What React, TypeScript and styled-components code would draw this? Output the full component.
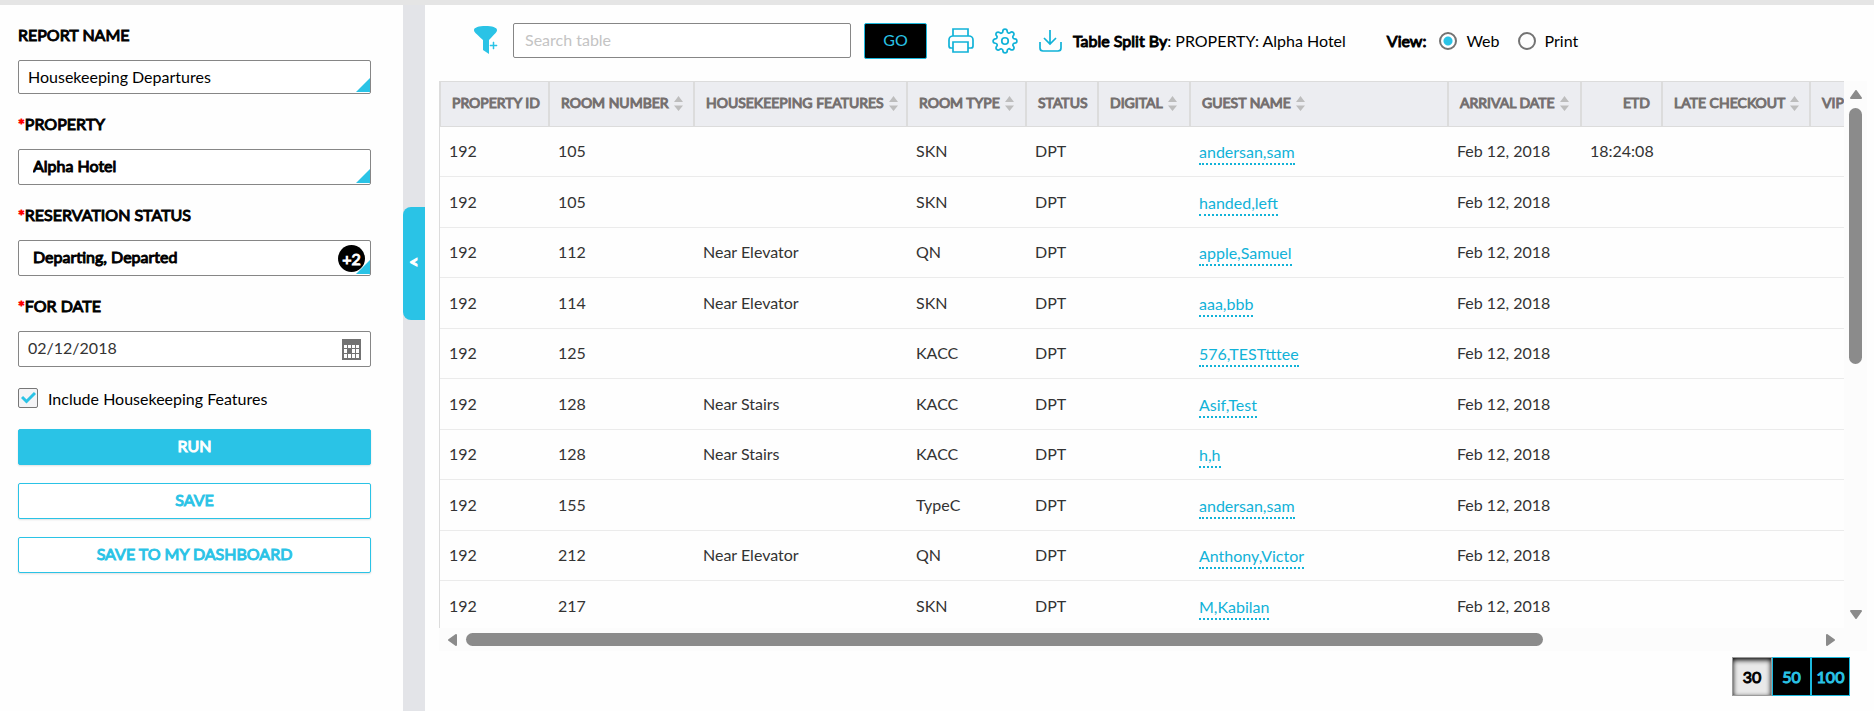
import React from "react";
import styled, { createGlobalStyle, css } from "styled-components";
import { FiSettings } from "react-icons/fi";

const CYAN = "#2ac3e6";

const GlobalStyle = createGlobalStyle`
  *, *::before, *::after { box-sizing: border-box; }
  body { margin: 0; background: #fefefe; color: #000; font: 16px/20px Lato, "Liberation Sans", sans-serif; }
  button, input { font: inherit; }
`;

const heavy = css`
  -webkit-text-stroke: 1px currentColor;
`;

const Page = styled.div`
  display: flex;
  min-height: 100vh;
  border-top: 5px solid #e5e5e5;
`;

const Sidebar = styled.form`
  flex: none;
  width: 403px;
  padding: 20px 32px 20px 18px;
  display: flex;
  flex-direction: column;
`;

const Field = styled.div`
  display: flex;
  flex-direction: column;
  gap: 15px;
  margin-bottom: 20px;
`;

const FieldLabel = styled.label`
  ${heavy}
`;

const Required = styled.span`
  color: #f00;
`;

const InputBox = styled.div<{ $corner?: boolean }>`
  position: relative;
  display: flex;
  align-items: center;
  height: 36px;
  border: 1px solid #868686;
  border-radius: 2px;
  background: #fff;

  ${(p) =>
    p.$corner &&
    css`
      &::after {
        content: "";
        position: absolute;
        right: 0;
        bottom: 1px;
        width: 14px;
        height: 14px;
        background: ${CYAN};
        clip-path: polygon(100% 0, 100% 100%, 0 100%);
      }
    `}
`;

const NameBox = styled(InputBox)`
  height: 34px;
`;

const TextInput = styled.input<{ $strong?: boolean }>`
  flex: 1;
  min-width: 0;
  border: 0;
  outline: 0;
  background: none;
  color: #000;
  padding: 0 ${(p) => (p.$strong ? "14px 2px" : "9px 0")};
  ${(p) => p.$strong && heavy}
  &::placeholder { color: #c4c4c4; opacity: 1; }
`;

const DateInput = styled(TextInput)`
  padding: 0 9px 2px;
  color: #333;
`;

const SearchInput = styled(TextInput)`
  padding: 0 11px 1px;
`;

const CountBadge = styled.span`
  flex: none;
  width: 27px;
  height: 27px;
  margin-right: 5px;
  border-radius: 50%;
  background: #000;
  color: #fff;
  text-align: center;
  line-height: 27px;
  ${heavy}
`;

const IconButton = styled.button`
  display: flex;
  flex: none;
  padding: 0;
  border: 0;
  background: none;
  color: #11b2d8;
  cursor: pointer;
`;

const CalendarButton = styled(IconButton)`
  margin-right: 9px;
  color: #737373;
`;

const CheckRow = styled.label`
  display: flex;
  align-items: flex-start;
  gap: 10px;
  margin: 1px 0 19px;
  line-height: 22px;
`;

const CheckBox = styled.input`
  appearance: none;
  width: 20px;
  height: 20px;
  margin: 0;
  border: 1px solid #777;
  border-radius: 2px;
  background: #f4f4f6;
`;

const CheckHolder = styled.span`
  position: relative;
  display: flex;
  svg { position: absolute; left: 3px; top: 3px; pointer-events: none; }
`;

const ActionButton = styled.button<{ $primary?: boolean }>`
  height: 36px;
  margin-bottom: 18px;
  padding: 0 0 2px;
  border: 1px solid ${CYAN};
  border-radius: 2px;
  background: ${(p) => (p.$primary ? CYAN : "#fff")};
  color: ${(p) => (p.$primary ? "#fff" : CYAN)};
  box-shadow: 0 1px 2px rgba(0, 0, 0, 0.12);
  cursor: pointer;
  ${heavy}
`;

const Divider = styled.div`
  flex: none;
  width: 22px;
  padding-top: 202px;
  background: #e3e4e8;
`;

const CollapseTab = styled.button`
  width: 100%;
  height: 113px;
  padding: 0 0 4px;
  border: 0;
  border-radius: 8px 0 0 8px;
  background: ${CYAN};
  color: #fff;
  cursor: pointer;
  font-weight: 900;
  ${heavy}
`;

const Main = styled.main`
  flex: 1;
  min-width: 0;
  padding: 18px 7px 0 14px;
`;

const Toolbar = styled.div`
  display: flex;
  align-items: center;
  height: 35px;
  margin-bottom: 23px;
  padding-left: 35px;
`;

const SearchBox = styled(InputBox)`
  width: 338px;
  height: 35px;
  margin: 0 13px 0 15px;
`;

const GoButton = styled.button`
  align-self: flex-start;
  width: 63px;
  height: 36px;
  margin-right: 21px;
  padding: 0 0 2px;
  border: 1px solid #1cb9de;
  border-radius: 2px;
  background: #000;
  color: ${CYAN};
  cursor: pointer;
`;

const ToolIcons = styled.div`
  display: flex;
  align-items: center;
  gap: 18px;
  margin-right: 9px;
`;

const Strong = styled.span`
  ${heavy}
`;

const ViewGroup = styled.div`
  display: flex;
  align-items: center;
  margin-left: 41px;
`;

const RadioLabel = styled.label`
  display: flex;
  align-items: center;
  gap: 9px;
  margin-left: 13px;
  & + & { margin-left: 18px; }
`;

const Radio = styled.input`
  appearance: none;
  width: 18px;
  height: 18px;
  margin: 0;
  border: 2px solid #737373;
  border-radius: 50%;
  &:checked { background: radial-gradient(circle, ${CYAN} 4px, #fff 5px); }
`;

const Scroller = styled.section`
  display: grid;
  grid-template-columns: minmax(0, 1fr) 23px;
  grid-template-rows: calc(100vh - 164px) 23px;
  background: #fcfcfc;
`;

const Viewport = styled.div`
  overflow: hidden;
  border-left: 1px solid #dcdcdc;
  background: #fefefe;
`;

const DataTable = styled.table`
  width: 1760px;
  table-layout: fixed;
  border-collapse: separate;
  border-spacing: 0;
`;

const HeadCell = styled.th<{ $width: number; $right?: boolean }>`
  width: ${(p) => p.$width}px;
  height: 46px;
  padding: 0 11px 2px;
  border: solid #dcdcdc;
  border-width: 1px 2px 1px 0;
  background: #ecedf1;
  color: #746f6f;
  font-size: 14px;
  font-weight: 400;
  text-align: ${(p) => (p.$right ? "right" : "left")};
  white-space: nowrap;
  ${heavy}
  &:first-child { border-left-width: 1px; }
`;

const HeadText = styled.span`
  display: inline-flex;
  align-items: center;
  gap: 5px;
`;

const Cell = styled.td<{ $right?: boolean }>`
  padding: 0 ${(p) => (p.$right ? 10 : 8)}px 2px 8px;
  border-bottom: 1px solid #ebebeb;
  color: #333;
  text-align: ${(p) => (p.$right ? "right" : "left")};
  white-space: nowrap;
  &:first-child { padding-left: 9px; }
`;

const BodyRow = styled.tr`
  height: 50px;
  &:nth-child(even) { height: 51px; }
  &:nth-child(even) ${Cell} { padding-bottom: 0; }
`;

const GuestLink = styled.a`
  display: inline-block;
  margin-top: 4px;
  border-bottom: 2px dotted #11b2d8;
  color: #11b2d8;
  line-height: 22px;
  text-decoration: none;
`;

const Track = styled.div<{ $vertical?: boolean }>`
  display: flex;
  flex-direction: ${(p) => (p.$vertical ? "column" : "row")};
  align-items: center;
  gap: 9px;
  padding: ${(p) => (p.$vertical ? "9px 0" : "0 9px")};
`;

const Rail = styled.div<{ $vertical?: boolean }>`
  flex: 1;
  ${(p) => (p.$vertical ? "width: 13px" : "height: 13px")};
`;

const Thumb = styled.div<{ $vertical?: boolean }>`
  border-radius: 7px;
  background: #8b8b8b;
  width: ${(p) => (p.$vertical ? "100%" : "calc(80% - 4px)")};
  height: ${(p) => (p.$vertical ? "52%" : "100%")};
`;

const Pager = styled.div`
  display: flex;
  justify-content: flex-end;
  margin: 6px 17px 0 0;
`;

const PageSize = styled.button<{ $active?: boolean }>`
  width: ${(p) => (p.$active ? 40 : 39)}px;
  height: 39px;
  padding: 0;
  border: 1px solid ${(p) => (p.$active ? "#9b9b9b" : "#1cb9de")};
  background: ${(p) => (p.$active ? "#e9e9e9" : "#000")};
  color: ${(p) => (p.$active ? "#000" : CYAN)};
  box-shadow: ${(p) => (p.$active ? "inset 0 2px 5px #000" : "none")};
  cursor: pointer;
  ${heavy}
`;

const Arrow = ({ w, h, d }: { w: number; h: number; d: string }) => (
  <svg width={w} height={h} viewBox={`0 0 ${w} ${h}`} fill="#8b8b8b" stroke="#8b8b8b" strokeWidth="2" strokeLinejoin="round">
    <path d={d} />
  </svg>
);

const SortIcon = () => (
  <svg width="9" height="15" viewBox="0 0 9 15" fill="#bdbdbd">
    <path d="M4.500 0 9 6H0zM4.500 15 0 9.500h9z" />
  </svg>
);

const columns = [
  { name: "PROPERTY ID", width: 110 },
  { name: "ROOM NUMBER", width: 145, sort: true },
  { name: "HOUSEKEEPING FEATURES", width: 213, sort: true },
  { name: "ROOM TYPE", width: 119, sort: true },
  { name: "STATUS", width: 72 },
  { name: "DIGITAL", width: 92, sort: true },
  { name: "GUEST NAME", width: 258, sort: true },
  { name: "ARRIVAL DATE", width: 133, sort: true },
  { name: "ETD", width: 81, right: true },
  { name: "LATE CHECKOUT", width: 148, sort: true },
  { name: "VIP", width: 389 },
];

const rows = [
  ["105", "", "SKN", "andersan,sam", "18:24:08"],
  ["105", "", "SKN", "handed,left", ""],
  ["112", "Near Elevator", "QN", "apple,Samuel", ""],
  ["114", "Near Elevator", "SKN", "aaa,bbb", ""],
  ["125", "", "KACC", "576,TESTtttee", ""],
  ["128", "Near Stairs", "KACC", "Asif,Test", ""],
  ["128", "Near Stairs", "KACC", "h,h", ""],
  ["155", "", "TypeC", "andersan,sam", ""],
  ["212", "Near Elevator", "QN", "Anthony,Victor", ""],
  ["217", "", "SKN", "M,Kabilan", ""],
];

export default function App() {
  return (
    <>
      <GlobalStyle />
      <Page>
        <Sidebar onSubmit={(e) => e.preventDefault()}>
          <Field>
            <FieldLabel htmlFor="name">REPORT NAME</FieldLabel>
            <NameBox $corner>
              <TextInput id="name" defaultValue="Housekeeping Departures" />
            </NameBox>
          </Field>
          <Field>
            <FieldLabel htmlFor="property"><Required>*</Required>PROPERTY</FieldLabel>
            <InputBox $corner>
              <TextInput id="property" $strong defaultValue="Alpha Hotel" />
            </InputBox>
          </Field>
          <Field>
            <FieldLabel htmlFor="status"><Required>*</Required>RESERVATION STATUS</FieldLabel>
            <InputBox $corner>
              <TextInput id="status" $strong defaultValue="Departing, Departed" />
              <CountBadge>+2</CountBadge>
            </InputBox>
          </Field>
          <Field>
            <FieldLabel htmlFor="date"><Required>*</Required>FOR DATE</FieldLabel>
            <InputBox>
              <DateInput id="date" defaultValue="02/12/2018" />
              <CalendarButton type="button" aria-label="Pick a date">
                <svg width="19" height="21" viewBox="0 0 19 21" fill="currentColor">
                  <path fillRule="evenodd" d="M0 0h19v21H0zM2 6v3h3V6zm4 0v3h3V6zm4 0v3h3V6zm4 0v3h3V6zM2 10v4h3v-4zm8 0v4h3v-4zm4 0v4h3v-4zM2 15v4h3v-4zm4 0v4h3v-4zm4 0v4h3v-4zm4 0v4h3v-4z" />
                </svg>
              </CalendarButton>
            </InputBox>
          </Field>
          <CheckRow>
            <CheckHolder>
              <CheckBox type="checkbox" defaultChecked />
              <svg width="15" height="13" viewBox="0 0 15 13" fill="none" stroke={CYAN} strokeWidth="3">
                <path d="M1 6l4.500 4.500L14 2" />
              </svg>
            </CheckHolder>
            Include Housekeeping Features
          </CheckRow>
          <ActionButton $primary>RUN</ActionButton>
          <ActionButton type="button">SAVE</ActionButton>
          <ActionButton type="button">SAVE TO MY DASHBOARD</ActionButton>
        </Sidebar>
        <Divider>
          <CollapseTab type="button">&lt;</CollapseTab>
        </Divider>
        <Main>
          <Toolbar>
            <IconButton aria-label="Filter">
              <svg width="24" height="29" viewBox="0 0 24 29" fill={CYAN}>
                <path d="M0 4C0 1.500 5 0 11.500 0S23 1.500 23 4c0 2-1.500 3-8 10v14l-6-4V14C1.500 7 0 6 0 4z" />
                <path d="M19 16h1v3h3v1h-3v3h-1v-3h-3v-1h3z" stroke={CYAN} strokeWidth="0.500" />
              </svg>
            </IconButton>
            <SearchBox>
              <SearchInput placeholder="Search table" aria-label="Search table" />
            </SearchBox>
            <GoButton>GO</GoButton>
            <ToolIcons>
              <IconButton aria-label="Print">
                <svg width="26" height="25" viewBox="0 0 26 25" fill="none" stroke="currentColor" strokeWidth="1.700">
                  <path d="M5 8V1h15v7M5 20H3a2 2 0 0 1-2-2v-6a4 4 0 0 1 4-4h16a4 4 0 0 1 4 4v6a2 2 0 0 1-2 2h-3M5 14h15v10H5z" />
                </svg>
              </IconButton>
              <IconButton aria-label="Settings">
                <FiSettings size={26} strokeWidth={1.6} />
              </IconButton>
              <IconButton aria-label="Download">
                <svg width="28" height="25" viewBox="-3 0 28 25" fill="none" stroke="currentColor" strokeWidth="1.700">
                  <path d="M11 2v14M5 10l6 6 6-6M1 14v6a3 3 0 0 0 3 3h15a3 3 0 0 0 3-3v-6" />
                </svg>
              </IconButton>
            </ToolIcons>
            <span><Strong>Table Split By</Strong>: PROPERTY: Alpha Hotel</span>
            <ViewGroup>
              <Strong>View:</Strong>
              <RadioLabel><Radio type="radio" name="view" defaultChecked />Web</RadioLabel>
              <RadioLabel><Radio type="radio" name="view" />Print</RadioLabel>
            </ViewGroup>
          </Toolbar>
          <Scroller>
            <Viewport>
              <DataTable>
                <thead>
                  <tr>
                    {columns.map((c) => (
                      <HeadCell key={c.name} $width={c.width} $right={c.right} scope="col">
                        <HeadText>{c.name}{c.sort && <SortIcon />}</HeadText>
                      </HeadCell>
                    ))}
                  </tr>
                </thead>
                <tbody>
                  {rows.map(([room, features, type, guest, etd], i) => (
                    <BodyRow key={i}>
                      <Cell>192</Cell>
                      <Cell>{room}</Cell>
                      <Cell>{features}</Cell>
                      <Cell>{type}</Cell>
                      <Cell>DPT</Cell>
                      <Cell />
                      <Cell><GuestLink href="#">{guest}</GuestLink></Cell>
                      <Cell>Feb 12, 2018</Cell>
                      <Cell $right>{etd}</Cell>
                      <Cell />
                      <Cell />
                    </BodyRow>
                  ))}
                </tbody>
              </DataTable>
            </Viewport>
            <Track $vertical>
              <Arrow w={12} h={9} d="M6 1 11 8H1z" />
              <Rail $vertical><Thumb $vertical /></Rail>
              <Arrow w={12} h={9} d="M6 8 11 1H1z" />
            </Track>
            <Track>
              <Arrow w={9} h={12} d="M1 6 8 1v10z" />
              <Rail><Thumb /></Rail>
              <Arrow w={9} h={12} d="M8 6 1 1v10z" />
            </Track>
          </Scroller>
          <Pager>
            <PageSize $active>30</PageSize>
            <PageSize>50</PageSize>
            <PageSize>100</PageSize>
          </Pager>
        </Main>
      </Page>
    </>
  );
}
